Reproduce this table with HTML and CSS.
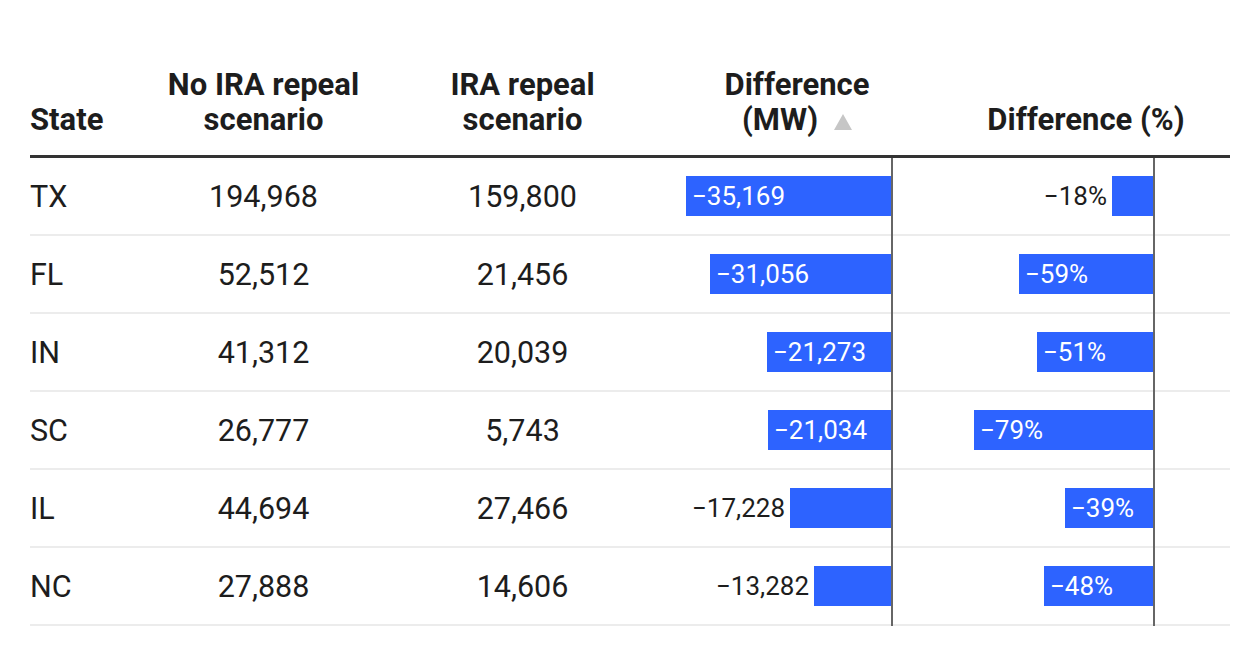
FILE: index.html
```html
<!DOCTYPE html>
<html lang="en">
<head>
<meta charset="utf-8">
<title>IRA repeal scenario table</title>
<link rel="stylesheet" href="styles.css">
</head>
<body>
<div class="table">
  <div class="row head">
    <div class="cell th left">State</div>
    <div class="cell th">No IRA repeal<br>scenario</div>
    <div class="cell th">IRA repeal<br>scenario</div>
    <div class="cell th">Difference<br>(MW) <svg class="sort" width="18" height="16" viewBox="0 0 18 16"><polygon points="9,0 18,16 0,16" fill="#c6c6c6"/></svg></div>
    <div class="cell th">Difference (%)</div>
  </div>

  <div class="row">
    <div class="cell left">TX</div>
    <div class="cell">194,968</div>
    <div class="cell">159,800</div>
    <div class="cell bars"><div class="track mw"><div class="bar" style="width:205px"><span class="in">−35,169</span></div></div></div>
    <div class="cell bars"><div class="track pct"><span class="out">−18%</span><div class="bar" style="width:41px"></div></div></div>
  </div>

  <div class="row">
    <div class="cell left">FL</div>
    <div class="cell">52,512</div>
    <div class="cell">21,456</div>
    <div class="cell bars"><div class="track mw"><div class="bar" style="width:181px"><span class="in">−31,056</span></div></div></div>
    <div class="cell bars"><div class="track pct"><div class="bar" style="width:134px"><span class="in">−59%</span></div></div></div>
  </div>

  <div class="row">
    <div class="cell left">IN</div>
    <div class="cell">41,312</div>
    <div class="cell">20,039</div>
    <div class="cell bars"><div class="track mw"><div class="bar" style="width:124px"><span class="in">−21,273</span></div></div></div>
    <div class="cell bars"><div class="track pct"><div class="bar" style="width:116px"><span class="in">−51%</span></div></div></div>
  </div>

  <div class="row">
    <div class="cell left">SC</div>
    <div class="cell">26,777</div>
    <div class="cell">5,743</div>
    <div class="cell bars"><div class="track mw"><div class="bar" style="width:123px"><span class="in">−21,034</span></div></div></div>
    <div class="cell bars"><div class="track pct"><div class="bar" style="width:179px"><span class="in">−79%</span></div></div></div>
  </div>

  <div class="row">
    <div class="cell left">IL</div>
    <div class="cell">44,694</div>
    <div class="cell">27,466</div>
    <div class="cell bars"><div class="track mw"><span class="out">−17,228</span><div class="bar" style="width:101px"></div></div></div>
    <div class="cell bars"><div class="track pct"><div class="bar" style="width:88px"><span class="in">−39%</span></div></div></div>
  </div>

  <div class="row last">
    <div class="cell left">NC</div>
    <div class="cell">27,888</div>
    <div class="cell">14,606</div>
    <div class="cell bars"><div class="track mw"><span class="out">−13,282</span><div class="bar" style="width:77px"></div></div></div>
    <div class="cell bars"><div class="track pct"><div class="bar" style="width:109px"><span class="in">−48%</span></div></div></div>
  </div>
</div>
</body>
</html>
```

FILE: styles.css
```css
html, body {
  margin: 0;
  padding: 0;
  background: #ffffff;
}

body {
  font-family: Roboto, "Liberation Sans", Arial, sans-serif;
  color: #1d1d1d;
}

.table {
  margin: 67px 30px 0;
  width: 1200px;
}

.row {
  display: grid;
  grid-template-columns: 104px 259px 259px 290px 288px;
  height: 76px;
  border-bottom: 2px solid #ececec;
  font-size: 30.5px;
}

.row.head {
  height: auto;
  align-items: end;
  border-bottom: 3px solid #333333;
  padding-bottom: 18px;
}

.cell {
  display: flex;
  align-items: center;
  justify-content: center;
  text-align: center;
  white-space: nowrap;
}

.cell.left {
  justify-content: flex-start;
  text-align: left;
}

.th {
  display: block;
  font-size: 31px;
  font-weight: 700;
  line-height: 35px;
  color: #1d1d1d;
}

.th.left {
  text-align: left;
}

.sort {
  margin-left: 8px;
  vertical-align: 0px;
}

.cell.bars {
  justify-content: flex-start;
  align-items: stretch;
}

.track {
  position: relative;
  display: flex;
  align-items: center;
  justify-content: flex-end;
}

.track.mw {
  width: 239px;
}

.track.pct {
  width: 211px;
}

.track::after {
  content: "";
  position: absolute;
  right: -2px;
  top: 0;
  bottom: -2px;
  width: 2px;
  background: #666666;
}

.row.last .track::after {
  bottom: -5px;
}

.bar {
  height: 40px;
  background: #2d63ff;
  display: flex;
  align-items: center;
  justify-content: flex-start;
}

.in,
.out {
  font-size: 26px;
  white-space: nowrap;
}

.in {
  color: #ffffff;
  padding-left: 6px;
}

.out {
  color: #1d1d1d;
  margin-right: 5px;
}
```
